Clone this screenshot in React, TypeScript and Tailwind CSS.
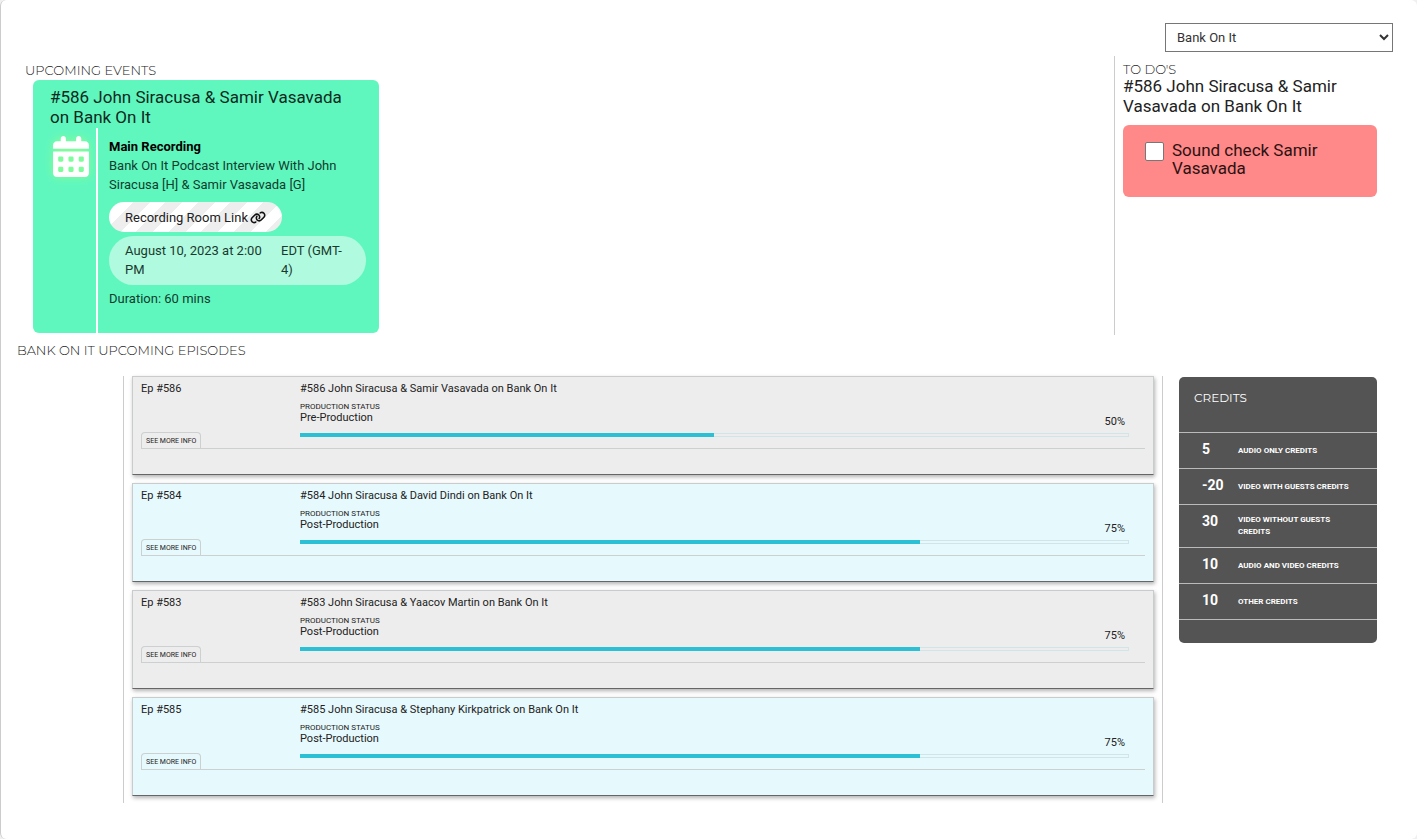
import { useState } from "react";
import { FaCalendarDays, FaLink } from "react-icons/fa6";

const heading = "font-['Montserrat','Inter',sans-serif] text-[13px] leading-[13px] font-light text-[#222]";

const episodes = [
  { number: 586, guest: "Samir Vasavada", status: "Pre-Production", percent: 50 },
  { number: 584, guest: "David Dindi", status: "Post-Production", percent: 75 },
  { number: 583, guest: "Yaacov Martin", status: "Post-Production", percent: 75 },
  { number: 585, guest: "Stephany Kirkpatrick", status: "Post-Production", percent: 75 },
];

const credits = [
  { amount: 5, label: "Audio only credits" },
  { amount: -20, label: "Video with guests credits" },
  { amount: 30, label: "Video without guests credits" },
  { amount: 10, label: "Audio and video credits" },
  { amount: 10, label: "Other credits" },
];

function EventCard() {
  return (
    <article className="ml-2 w-[346px] overflow-hidden rounded-md bg-[#60f7bf] pt-[7px]">
      <h3 className="px-[17px] pb-px text-[17px] leading-5 text-[#0c2a20]">#586 John Siracusa &amp; Samir Vasavada on Bank On It</h3>
      <div className="flex">
        <div className="flex w-[65px] shrink-0 justify-end border-r-2 border-white pt-2 pr-[7px]">
          <FaCalendarDays className="h-[41px] w-9 text-white drop-shadow-[0_0_4px_rgba(150,255,130,0.8)]" aria-hidden="true" />
        </div>
        <div className="min-w-0 flex-1 pt-[9px] pr-[13px] pb-[25px] pl-[11px] text-[13px] leading-[19px] text-[#0f3d2d]">
          <h4 className="font-bold text-black">Main Recording</h4>
          <p>Bank On It Podcast Interview With John Siracusa [H] &amp; Samir Vasavada [G]</p>
          <a
            href="#room"
            className="mt-2 flex h-[30px] w-fit items-center gap-0.5 rounded-full bg-[repeating-linear-gradient(135deg,#eee_0_6px,#fff_6px_17px,#eee_17px_23px)] px-4 text-[#222]"
          >
            Recording Room Link <FaLink className="h-[13px] w-4 text-[#111]" aria-hidden="true" />
          </a>
          <div className="mt-1 flex gap-4 rounded-[25px] bg-[#b0fbdf] px-4 pt-[5px] pb-1.5 text-[#1b3a2f]">
            <span className="w-[140px] shrink-0">August 10, 2023 at 2:00 PM</span>
            <span className="w-[65px]">EDT (GMT-4)</span>
          </div>
          <p className="mt-1">Duration: 60 mins</p>
        </div>
      </div>
    </article>
  );
}

function Todos() {
  const [done, setDone] = useState(false);
  return (
    <section className="w-[271px] shrink-0 border-l border-[#ccc] pt-[7px] pr-2 pl-2">
      <h2 className={heading}>TO DO'S</h2>
      <h3 className="text-[17px] leading-5 text-[#222]">#586 John Siracusa &amp; Samir Vasavada on Bank On It</h3>
      <label className="mt-[9px] flex h-[72px] gap-2 rounded-md bg-[#ff8888] px-[22px] pt-4 text-[17px] leading-[18px] text-[#2b1212]">
        <input
          type="checkbox"
          checked={done}
          onChange={(e) => setDone(e.target.checked)}
          className="mt-px size-[19px] shrink-0 appearance-none rounded-xs border border-[#777] bg-white checked:bg-[#2bc0d4]"
        />
        Sound check Samir Vasavada
      </label>
    </section>
  );
}

function Episode({ number, guest, status, percent }: (typeof episodes)[number]) {
  return (
    <article className="h-[99px] border border-[#c8cccc] border-b-[#666] bg-[#ededed] px-2 text-[11px] text-[#222] shadow-[1px_2px_4px_rgba(0,0,0,0.3)] even:bg-[#e6f9fd]">
      <div className="flex h-[72px] border-b border-[#ccd0d0]">
        <div className="flex w-[159px] shrink-0 flex-col items-start justify-between pt-1">
          <h3 className="leading-4">Ep #{number}</h3>
          <button type="button" className="h-4 rounded-t border border-b-0 border-[#ccd0d0] px-1 text-[7px] leading-4 text-[#222]">
            SEE MORE INFO
          </button>
        </div>
        <div className="min-w-0 flex-1 pt-1 pr-4">
          <h4 className="leading-4">
            #{number} John Siracusa &amp; {guest} on Bank On It
          </h4>
          <p className="mt-1 text-[8px] leading-3">PRODUCTION STATUS</p>
          <div className="flex items-start justify-between pr-1">
            <p className="leading-[10px]">{status}</p>
            <p className="mt-0.5 leading-3.5">{percent}%</p>
          </div>
          <div className="mt-1 h-[4px] border border-[#cfe5e7]">
            <div className="-mt-px -ml-px h-[4px] bg-[#2bc0d4]" style={{ width: `${percent}%` }} />
          </div>
        </div>
      </div>
    </article>
  );
}

function Credits() {
  return (
    <section className="mt-px w-[198px] self-start overflow-hidden rounded-[5px] bg-[#545454] pb-[23px] text-white">
      <h2 className="h-14 border-b border-[#bbb] px-[15px] pt-[13px] font-['Montserrat','Inter',sans-serif] text-xs leading-4">CREDITS</h2>
      <ul>
        {credits.map(({ amount, label }) => (
          <li key={label} className="flex min-h-9 border-b border-[#bbb] pr-5 pl-[23px]">
            <span className="w-9 shrink-0 pt-2 text-sm leading-[17px] font-bold">{amount}</span>
            <span className="self-center py-[9px] text-[8px] leading-3 font-bold uppercase">{label}</span>
          </li>
        ))}
      </ul>
    </section>
  );
}

export default function App() {
  return (
    <main className="min-h-screen bg-[#f0f0f0] pb-px font-[Roboto,sans-serif]">
      <div className="min-h-[838px] rounded-md border-l border-[#ccc] bg-white pt-[23px] pr-8 pb-9 pl-4">
        <div className="-mr-2 flex justify-end">
          <select aria-label="Show" className="h-[29px] w-[228px] border border-[#767676] bg-white px-[7px] text-[13px] text-[#333]">
            <option>Bank On It</option>
          </select>
        </div>
        <div className="mt-1 flex justify-between">
          <section className="min-w-0 px-2 pt-2 pb-0.5">
            <h2 className={`${heading} mb-[3px]`}>UPCOMING EVENTS</h2>
            <EventCard />
          </section>
          <Todos />
        </div>
        <h2 className={`${heading} mt-[9px]`}>BANK ON IT UPCOMING EPISODES</h2>
        <div className="mt-[19px] flex gap-4 pr-2">
          <section className="ml-[106px] flex min-w-0 flex-1 flex-col gap-2 border-x border-[#ccc] px-2 pb-[7px]">
            {episodes.map((episode) => (
              <Episode key={episode.number} {...episode} />
            ))}
          </section>
          <Credits />
        </div>
      </div>
    </main>
  );
}
